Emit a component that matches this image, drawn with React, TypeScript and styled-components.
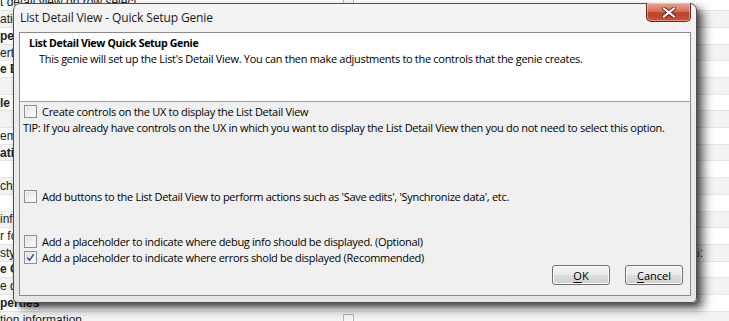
import React from "react";
import styled, { createGlobalStyle } from "styled-components";

const GlobalStyle = createGlobalStyle`
  html, body { margin: 0; padding: 0; background: #ffffff; overflow: hidden; }
  #root { width: 729px; height: 321px; }
`;

const Page = styled.div`
  position: relative;
  width: 729px;
  height: 321px;
  overflow: hidden;
  background: #ffffff;
  font-family: "Liberation Sans", Arial, sans-serif;
`;

const Sheet = styled.div`
  display: flex;
  flex-direction: column;
  margin-top: -5.4px;
`;

const SheetRow = styled.div<{ $shade: boolean }>`
  display: grid;
  grid-template-columns: 340px 1fr;
  align-items: center;
  height: 16.7px;
  box-sizing: border-box;
  border-bottom: 1px solid #e4e4e4;
  background: ${(p) => (p.$shade ? "#f3f3f3" : "#ffffff")};
  font-size: 12px;
  color: #222;
`;

const NameCell = styled.div<{ $bold: boolean }>`
  font-weight: ${(p) => (p.$bold ? 700 : 400)};
  white-space: nowrap;
  overflow: hidden;
`;

const ValueCell = styled.div`
  display: flex;
  align-items: center;
  justify-content: space-between;
  padding-right: 26px;
  font-size: 12px;
  color: #333;
`;

const MiniBox = styled.span`
  width: 11px;
  height: 11px;
  margin-left: 3px;
  box-sizing: border-box;
  border: 1px solid #b5b5b5;
  background: #f7f7f7;
`;

const Dialog = styled.div`
  position: absolute;
  left: 13px;
  top: 3px;
  width: 684px;
  height: 300px;
  box-sizing: border-box;
  border: 1px solid #505050;
  border-radius: 7px 7px 5px 5px;
  background: linear-gradient(180deg, #f4f4f4 0%, #ebebeb 40%, #e6e6e6 100%);
  box-shadow: 7px 6px 10px rgba(0, 0, 0, 0.55), 2px 3px 4px rgba(0, 0, 0, 0.35);
  display: flex;
  flex-direction: column;
  padding: 0 5px 6px 5px;
  font-family: "Open Sans", "Noto Sans", sans-serif;
  font-size: 11px;
  color: #000;
`;

const TitleBar = styled.div`
  height: 28px;
  display: flex;
  align-items: flex-start;
  justify-content: space-between;
  flex: none;
`;

const TitleText = styled.div`
  padding: 5px 0 0 1px;
  font-size: 12px;
  color: #1a1a1a;
  letter-spacing: -0.12px;
`;

const CloseButton = styled.div`
  width: 45px;
  height: 19px;
  margin-top: -1px;
  box-sizing: border-box;
  border: 1px solid #6b2a20;
  border-top: none;
  border-radius: 0 0 5px 5px;
  background: linear-gradient(180deg, #e9a593 0%, #d7715c 45%, #c0402b 55%, #c9523a 100%);
  box-shadow: inset 0 0 0 1px rgba(255, 220, 210, 0.45);
  display: flex;
  align-items: center;
  justify-content: center;
`;

const Client = styled.div`
  flex: 1;
  display: flex;
  flex-direction: column;
  border: 1px solid #8a8a8a;
  background: #f0f0f0;
  min-height: 0;
`;

const Header = styled.div`
  height: 69px;
  box-sizing: border-box;
  background: #ffffff;
  border-bottom: 1px solid #a0a0a0;
  padding: 3px 0 0 9px;
  flex: none;
`;

const HeaderTitle = styled.div`
  font-weight: 700;
  font-size: 10.6px;
  line-height: 15px;
  letter-spacing: -0.35px;
`;

const HeaderSub = styled.div`
  padding-left: 10px;
  line-height: 15px;
  letter-spacing: -0.3px;
`;

const Body = styled.div`
  flex: 1;
  display: flex;
  flex-direction: column;
  padding: 2px 7px 0 3px;
  letter-spacing: -0.3px;
`;

const OptionRow = styled.label<{ $top: number }>`
  display: flex;
  align-items: center;
  gap: 5px;
  height: 15px;
  margin-top: ${(p) => p.$top}px;
  padding-left: 1px;
  white-space: nowrap;
`;

const Check = styled.span`
  width: 13px;
  height: 13px;
  box-sizing: border-box;
  border: 1px solid #8e8f8f;
  background: linear-gradient(135deg, #dcdcdc 0%, #f4f4f4 60%, #ffffff 100%);
  box-shadow: inset 0 0 0 1px #f4f4f4;
  display: flex;
  align-items: center;
  justify-content: center;
  flex: none;
`;

const Tip = styled.div`
  line-height: 15px;
  margin-top: 1px;
  white-space: nowrap;
`;

const Footer = styled.div`
  margin-top: auto;
  display: flex;
  justify-content: flex-end;
  gap: 15px;
  padding-bottom: 11px;
  letter-spacing: 0;
`;

const Button = styled.div`
  width: 58px;
  height: 20px;
  box-sizing: border-box;
  border: 1px solid #707070;
  border-radius: 3px;
  background: linear-gradient(180deg, #f2f2f2 0%, #ebebeb 48%, #dddddd 52%, #cfcfcf 100%);
  box-shadow: inset 0 0 0 1px #fbfbfb;
  display: flex;
  align-items: center;
  justify-content: center;
  font-size: 11px;
`;

const Mnemonic = styled.span`
  text-decoration: underline;
  text-underline-offset: 2px;
`;

const rows: { name: string; bold?: boolean; value?: string; box?: boolean }[] = [
  { name: "t detail view on row select", box: true },
  { name: "atic" },
  { name: "pe", bold: true },
  { name: "ertie" },
  { name: "e B", bold: true },
  { name: "" },
  { name: "le", bold: true },
  { name: "" },
  { name: "em" },
  { name: "atic", bold: true },
  { name: "" },
  { name: "ch" },
  { name: "" },
  { name: "inf" },
  { name: "r fo" },
  { name: "sty", value: "%:" },
  { name: "e C", bold: true },
  { name: "e d" },
  { name: "perties", bold: true },
  { name: "tion information", box: true },
];

const CheckMark = () => (
  <svg width="9" height="9" viewBox="0 0 9 9">
    <path d="M1.2 4.6 L3.5 7.2 L7.8 1.2" fill="none" stroke="#3d5a9a" strokeWidth="1.6" />
  </svg>
);

const CloseX = () => (
  <svg width="14" height="11" viewBox="0 0 14 11">
    <path d="M2 1.5 L12 9.5 M12 1.5 L2 9.5" stroke="#5a2018" strokeWidth="4" strokeLinecap="square" />
    <path d="M2 1.5 L12 9.5 M12 1.5 L2 9.5" stroke="#ffffff" strokeWidth="2.2" strokeLinecap="square" />
  </svg>
);

export default function App() {
  return (
    <Page>
      <GlobalStyle />
      <Sheet>
        {rows.map((r, i) => (
          <SheetRow key={i} $shade={i % 2 === 1}>
            <NameCell $bold={!!r.bold}>{r.name}</NameCell>
            <ValueCell>
              {r.box ? <MiniBox /> : <span />}
              <span>{r.value ?? ""}</span>
            </ValueCell>
          </SheetRow>
        ))}
      </Sheet>
      <Dialog>
        <TitleBar>
          <TitleText>List Detail View - Quick Setup Genie</TitleText>
          <CloseButton>
            <CloseX />
          </CloseButton>
        </TitleBar>
        <Client>
          <Header>
            <HeaderTitle>List Detail View Quick Setup Genie</HeaderTitle>
            <HeaderSub>
              This genie will set up the List's Detail View. You can then make adjustments to the controls that the genie creates.
            </HeaderSub>
          </Header>
          <Body>
            <OptionRow $top={0}>
              <Check />
              <span>Create controls on the UX to display the List Detail View</span>
            </OptionRow>
            <Tip>
              TIP: If you already have controls on the UX in which you want to display the List Detail View then you do not need to select this option.
            </Tip>
            <OptionRow $top={54}>
              <Check />
              <span>Add buttons to the List Detail View to perform actions such as 'Save edits', 'Synchronize data', etc.</span>
            </OptionRow>
            <OptionRow $top={30}>
              <Check />
              <span>Add a placeholder to indicate where debug info should be displayed. (Optional)</span>
            </OptionRow>
            <OptionRow $top={1}>
              <Check>
                <CheckMark />
              </Check>
              <span>Add a placeholder to indicate where errors shold be displayed (Recommended)</span>
            </OptionRow>
            <Footer>
              <Button>
                <span>
                  <Mnemonic>O</Mnemonic>K
                </span>
              </Button>
              <Button>
                <span>
                  <Mnemonic>C</Mnemonic>ancel
                </span>
              </Button>
            </Footer>
          </Body>
        </Client>
      </Dialog>
    </Page>
  );
}
